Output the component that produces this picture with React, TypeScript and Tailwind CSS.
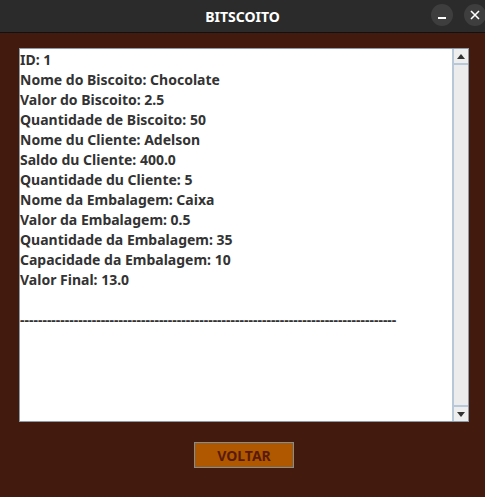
import React from "react";

const lines = [
  "ID: 1",
  "Nome do Biscoito: Chocolate",
  "Valor do Biscoito: 2.5",
  "Quantidade de Biscoito: 50",
  "Nome du Cliente: Adelson",
  "Saldo du Cliente: 400.0",
  "Quantidade du Cliente: 5",
  "Nome da Embalagem: Caixa",
  "Valor da Embalagem: 0.5",
  "Quantidade da Embalagem: 35",
  "Capacidade da Embalagem: 10",
  "Valor Final: 13.0",
  "\u00a0",
  "-".repeat(84),
];

export default function App() {
  return (
    <div
      className="w-[485px] h-[497px] flex flex-col bg-[#421a0e]"
      style={{ fontFamily: '"Noto Sans", "Open Sans", sans-serif' }}
    >
      <div className="h-[33px] shrink-0 bg-[#2b2b2b] border-b border-[#111] relative flex items-center justify-center">
        <span className="text-white font-bold text-[14px]">BITSCOITO</span>
        <div className="absolute right-[-1px] top-[4px] flex gap-[11px]">
          <div className="w-[22px] h-[22px] rounded-full bg-[#3e3e3e] flex items-center justify-center">
            <div className="w-[8px] h-[2px] bg-white mt-[6px]" />
          </div>
          <div className="w-[22px] h-[22px] rounded-full bg-[#3e3e3e] flex items-center justify-center">
            <svg width="10" height="10" viewBox="0 0 10 10">
              <path d="M1 1 L9 9 M9 1 L1 9" stroke="white" strokeWidth="1.6" />
            </svg>
          </div>
        </div>
      </div>
      <div className="pl-[19px] pt-[15px] flex">
        <div className="w-[450px] h-[374px] bg-white border border-[#8a9aa6] flex">
          <div className="flex-1 text-[14px] font-bold text-[#333] leading-[20px] pt-[1px]">
            {lines.map((l, i) => (
              <div key={i} className="whitespace-pre">{l}</div>
            ))}
          </div>
          <div className="w-[16px] h-full flex flex-col bg-[#ececec] border-l-2 border-[#b8c8d8]">
            <div className="h-[16px] flex items-center justify-center border-b-2 border-[#b8c8d8] bg-[#eeeeee]">
              <svg width="8" height="5" viewBox="0 0 8 5"><path d="M0 5 L4 0 L8 5 Z" fill="#333" /></svg>
            </div>
            <div className="flex-1" />
            <div className="h-[16px] flex items-center justify-center border-t-2 border-[#b8c8d8] bg-[#eeeeee]">
              <svg width="8" height="5" viewBox="0 0 8 5"><path d="M0 0 L4 5 L8 0 Z" fill="#333" /></svg>
            </div>
          </div>
        </div>
      </div>
      <div className="flex justify-center pt-[20px] pl-[3px]">
        <div className="w-[100px] h-[26px] bg-[#b05800] border border-[#7b8f9e] flex items-center justify-center text-[14px] font-bold text-[#5a1a08]">
          VOLTAR
        </div>
      </div>
    </div>
  );
}
